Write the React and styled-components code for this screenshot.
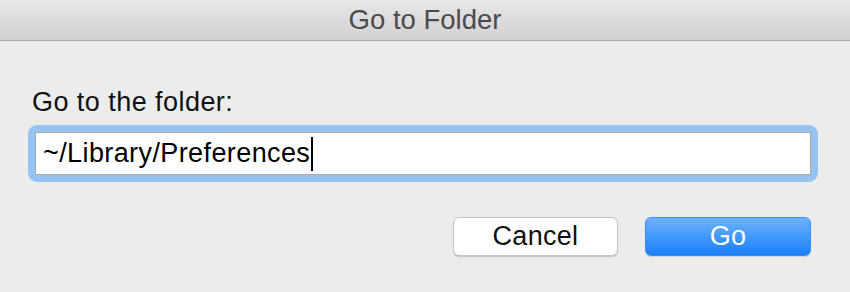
import React from 'react';
import styled, { createGlobalStyle } from 'styled-components';

const GlobalStyle = createGlobalStyle`
    html, body {
        margin: 0;
        padding: 0;
        background: #ececec;
        font-family: "Liberation Sans", Helvetica, Arial, sans-serif;
        -webkit-font-smoothing: antialiased;
    }
`

const Dialog = styled.div`
    width: 850px;
    height: 292px;
    background: #ececec;
    display: flex;
    flex-direction: column;
`

const TitleBar = styled.div`
    height: 40px;
    border-bottom: 1px solid #adabad;
    background: linear-gradient(to bottom, #e8e6e8, #d2d0d2);
    display: flex;
    align-items: center;
    justify-content: center;
`

const Title = styled.h1`
    margin: 0;
    font-size: 27.5px;
    font-weight: normal;
    color: #4b4b4b;
    line-height: 40px;
`

const Content = styled.div`
    padding: 46px 32px 0 28px;
    display: flex;
    flex-direction: column;
`

const Label = styled.label`
    margin-left: 4px;
    font-size: 27px;
    letter-spacing: 0.45px;
    line-height: 30px;
    color: #111;
`

const FocusRing = styled.div`
    margin-top: 8px;
    padding: 7px;
    border-radius: 9px;
    background: #97c3f2;
`

const Field = styled.div`
    height: 41px;
    border: 1px solid #a9a9a9;
    background: #fff;
    padding-left: 7px;
    display: flex;
    align-items: center;
`

const FieldText = styled.span`
    font-size: 27px;
    letter-spacing: 0.4px;
    line-height: 41px;
    color: #000;
    white-space: pre;
`

const Caret = styled.span`
    width: 2px;
    height: 34px;
    margin-left: 1px;
    background: #000;
`

const Buttons = styled.div`
    margin-top: 35px;
    margin-right: 7px;
    display: flex;
    justify-content: flex-end;
    gap: 27px;
`

const Button = styled.button`
    width: ${({ width }) => width}px;
    height: 39px;
    border-radius: 6px;
    font-family: inherit;
    font-size: 27px;
    letter-spacing: 0.3px;
    padding: 0;
    line-height: 37px;
    cursor: default;
    color: ${({ primary }) => (primary ? '#fff' : '#111')};
    border: 1px solid ${({ primary }) => (primary ? '#3d8ef6' : '#c4c4c4')};
    background: ${({ primary }) =>
        primary ? 'linear-gradient(to bottom, #6cb2fb, #1a80fb)' : '#fff'};
    box-shadow: ${({ primary }) =>
        primary ? '0 1px 1px rgba(0, 60, 160, 0.15)' : '0 1px 1px rgba(0, 0, 0, 0.18)'};
`

const App = () => {
    return (
        <Dialog>
            <GlobalStyle />
            <TitleBar>
                <Title>Go to Folder</Title>
            </TitleBar>
            <Content>
                <Label>Go to the folder:</Label>
                <FocusRing>
                    <Field>
                        <FieldText>~/Library/Preferences</FieldText>
                        <Caret />
                    </Field>
                </FocusRing>
                <Buttons>
                    <Button width={165}>Cancel</Button>
                    <Button width={166} primary>Go</Button>
                </Buttons>
            </Content>
        </Dialog>
    )
}

export default App;
